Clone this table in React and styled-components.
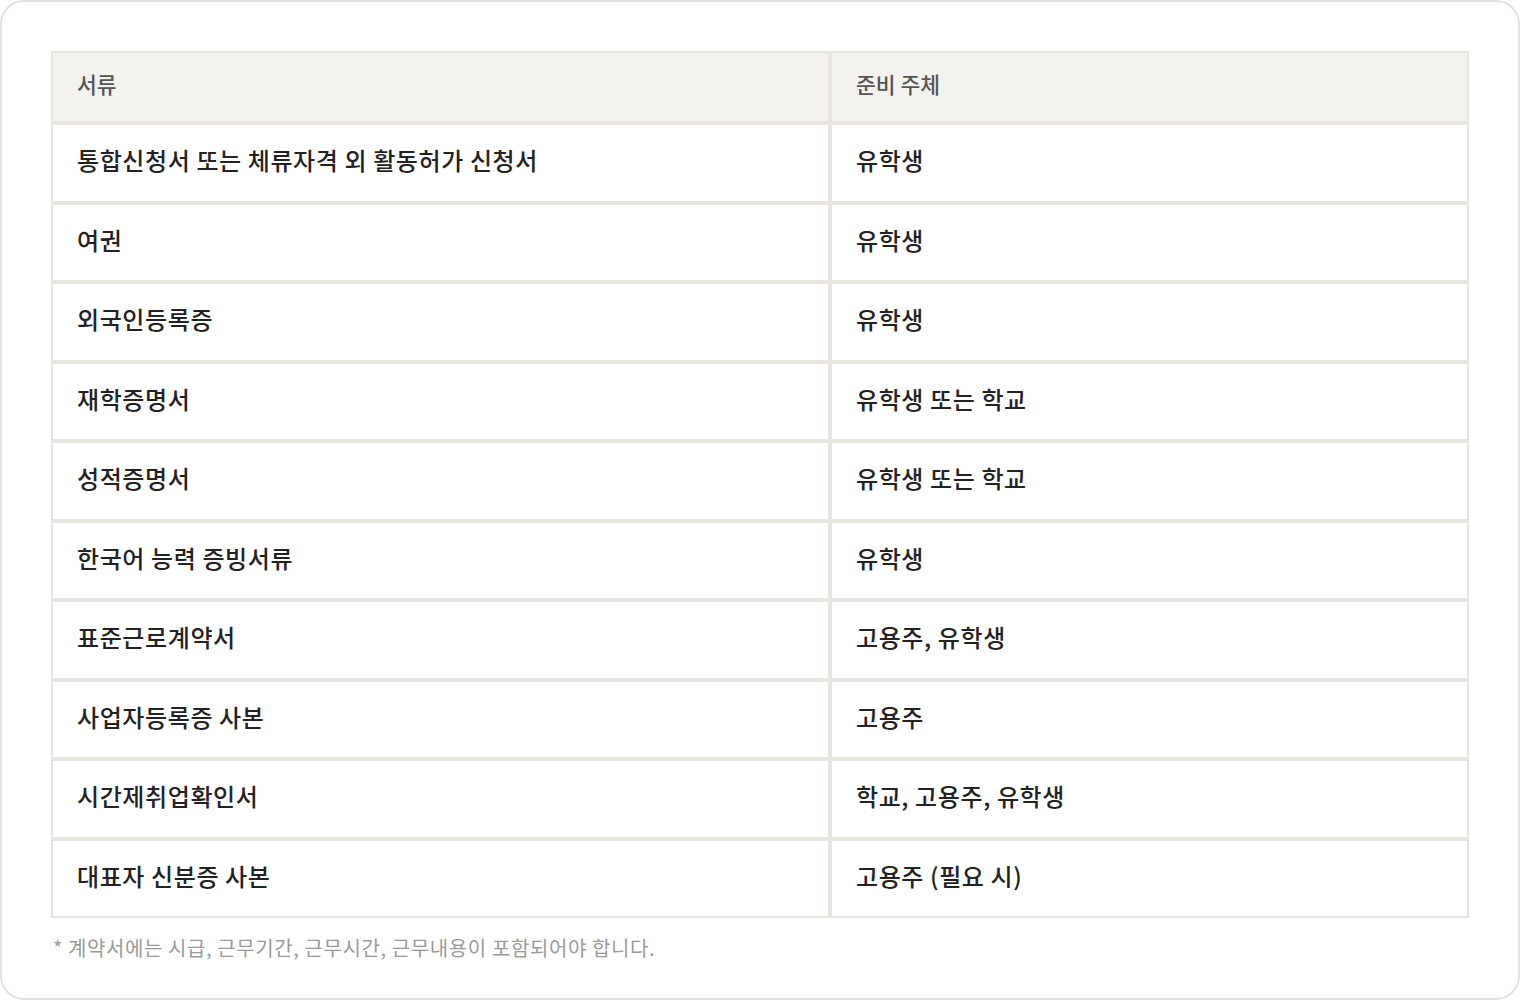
import React from 'react';
import styled, { createGlobalStyle } from 'styled-components';

const GlobalStyle = createGlobalStyle`
    body {
        margin: 0;
        background: #ffffff;
        font-family: "Noto Sans CJK KR", "Noto Sans", sans-serif;
    }
`;

const Card = styled.section`
    box-sizing: border-box;
    width: 1520px;
    height: 1000px;
    border: 2px solid #e4e1dc;
    border-radius: 24px;
    padding: 49px 49px 0;
    background: #ffffff;
`;

const Table = styled.table`
    width: 100%;
    border-collapse: separate;
    border-spacing: 0;
    table-layout: fixed;
`;

const HeadCell = styled.th`
    box-sizing: border-box;
    width: ${props => props.w || 'auto'};
    height: 72px;
    padding: 0 24px 5px;
    border: 2px solid #e8e5e0;
    background: #f3f2ef;
    color: #555555;
    font-size: 21.5px;
    font-weight: 500;
    text-align: left;
    line-height: 1.4;
`;

const Cell = styled.td`
    box-sizing: border-box;
    height: 79.5px;
    padding: 0 24px 5px;
    border: 2px solid #e8e5e0;
    color: #222222;
    font-size: 24px;
    font-weight: 500;
    line-height: 1.4;
    letter-spacing: 0.6px;
`;

const Note = styled.p`
    margin: 15px 0 0 2px;
    color: #9a9a9a;
    font-size: 20px;
    letter-spacing: 0.6px;
`;

const rows = [
    ['통합신청서 또는 체류자격 외 활동허가 신청서', '유학생'],
    ['여권', '유학생'],
    ['외국인등록증', '유학생'],
    ['재학증명서', '유학생 또는 학교'],
    ['성적증명서', '유학생 또는 학교'],
    ['한국어 능력 증빙서류', '유학생'],
    ['표준근로계약서', '고용주, 유학생'],
    ['사업자등록증 사본', '고용주'],
    ['시간제취업확인서', '학교, 고용주, 유학생'],
    ['대표자 신분증 사본', '고용주 (필요 시)'],
];

const App = () => {
    return (
        <>
            <GlobalStyle />
            <Card>
                <Table>
                    <thead>
                        <tr>
                            <HeadCell w='779px'>서류</HeadCell>
                            <HeadCell>준비 주체</HeadCell>
                        </tr>
                    </thead>
                    <tbody>
                        {rows.map(([doc, who]) => (
                            <tr key={doc}>
                                <Cell>{doc}</Cell>
                                <Cell>{who}</Cell>
                            </tr>
                        ))}
                    </tbody>
                </Table>
                <Note>* 계약서에는 시급, 근무기간, 근무시간, 근무내용이 포함되어야 합니다.</Note>
            </Card>
        </>
    );
};

export default App;
